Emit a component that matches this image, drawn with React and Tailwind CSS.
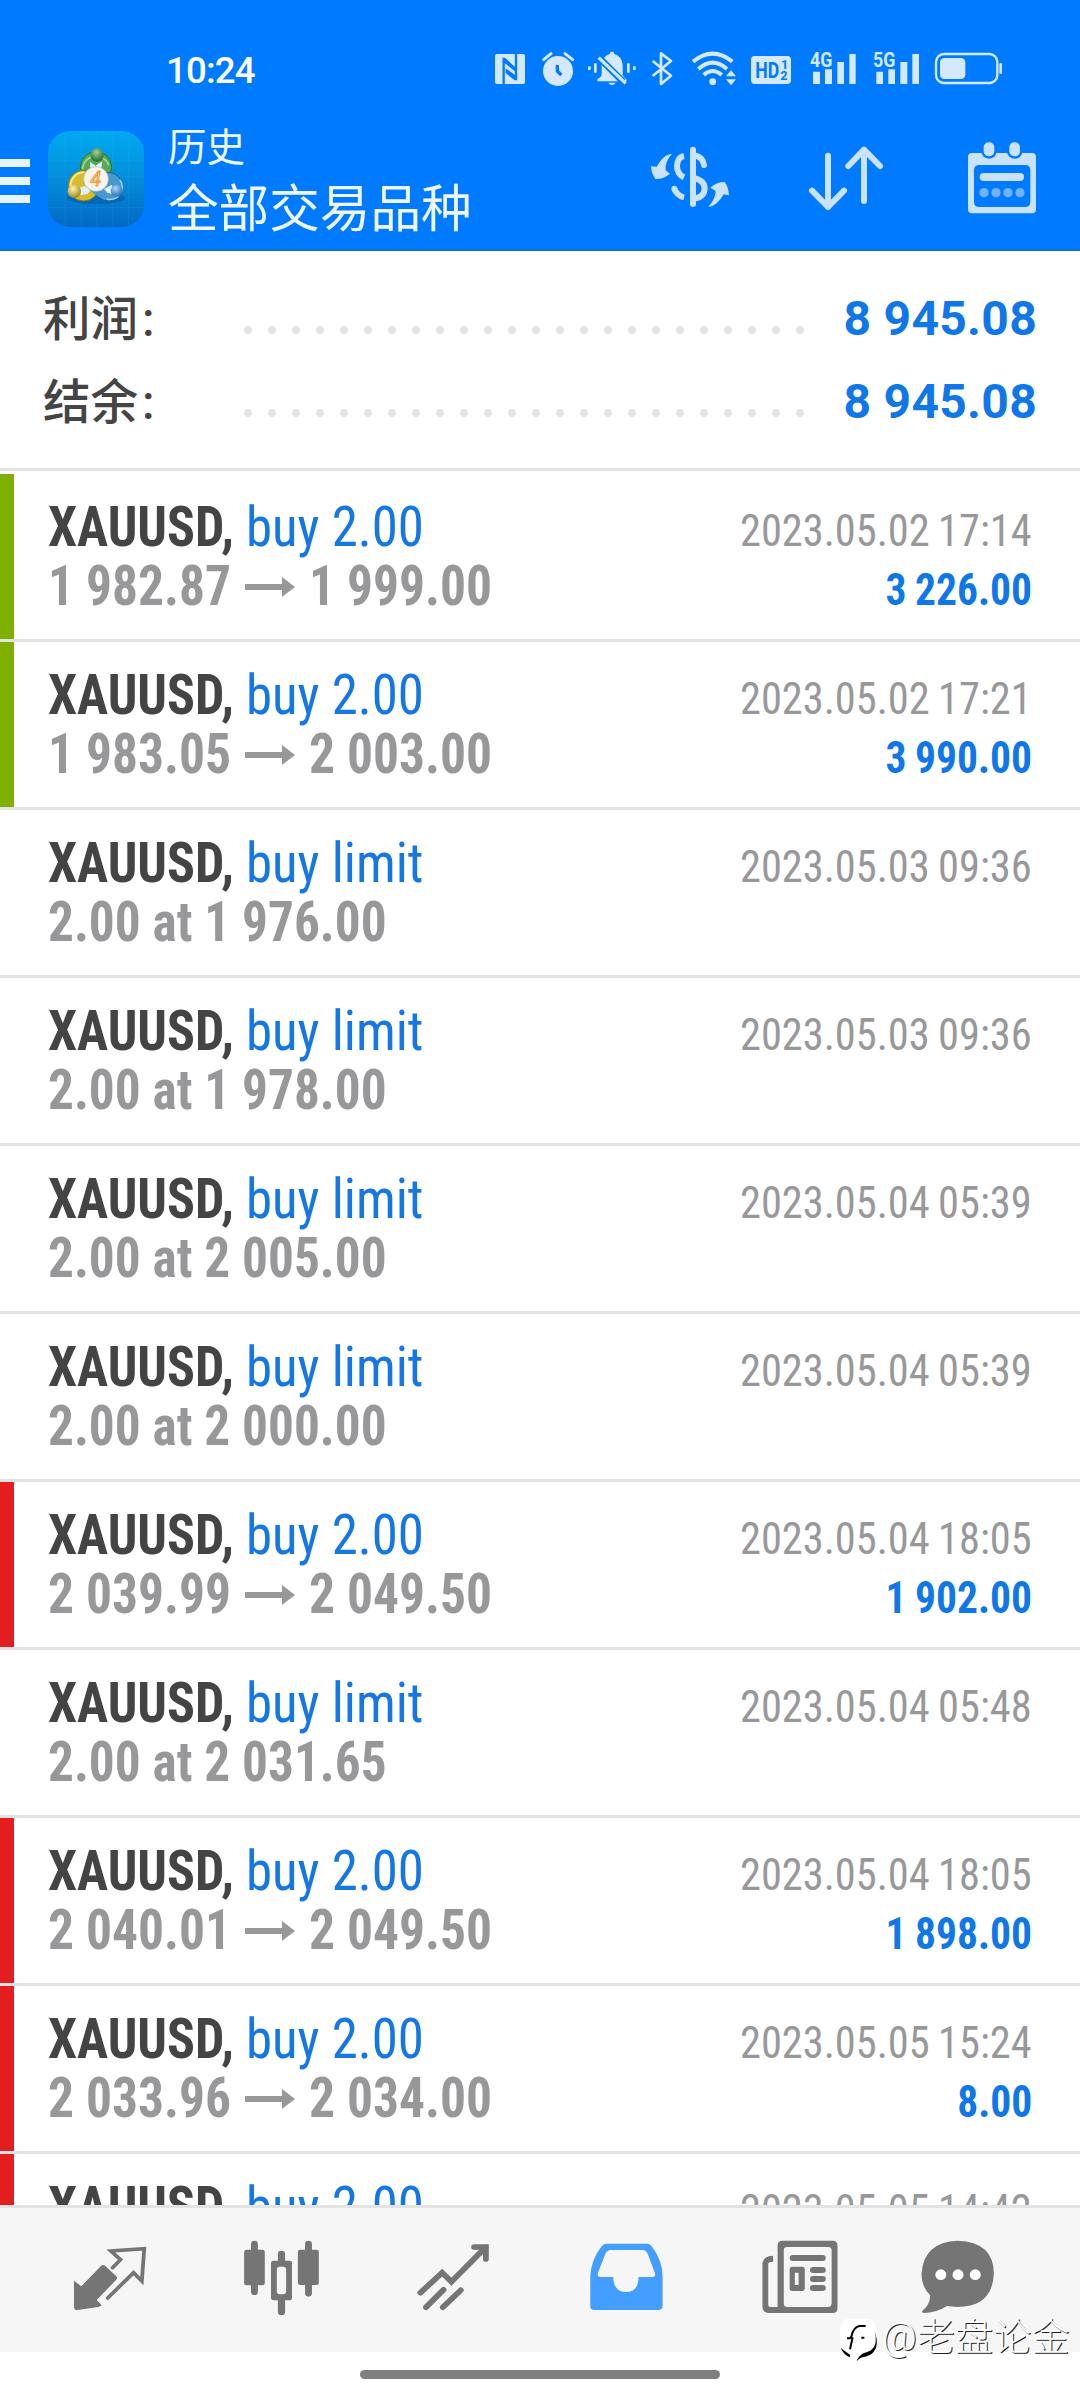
import React from "react";

const rows = [
  { bar: "green", op: "buy 2.00", from: "1 982.87", to: "1 999.00", date: "2023.05.02 17:14", profit: "3 226.00" },
  { bar: "green", op: "buy 2.00", from: "1 983.05", to: "2 003.00", date: "2023.05.02 17:21", profit: "3 990.00" },
  { op: "buy limit", at: "2.00 at 1 976.00", date: "2023.05.03 09:36" },
  { op: "buy limit", at: "2.00 at 1 978.00", date: "2023.05.03 09:36" },
  { op: "buy limit", at: "2.00 at 2 005.00", date: "2023.05.04 05:39" },
  { op: "buy limit", at: "2.00 at 2 000.00", date: "2023.05.04 05:39" },
  { bar: "red", op: "buy 2.00", from: "2 039.99", to: "2 049.50", date: "2023.05.04 18:05", profit: "1 902.00" },
  { op: "buy limit", at: "2.00 at 2 031.65", date: "2023.05.04 05:48" },
  { bar: "red", op: "buy 2.00", from: "2 040.01", to: "2 049.50", date: "2023.05.04 18:05", profit: "1 898.00" },
  { bar: "red", op: "buy 2.00", from: "2 033.96", to: "2 034.00", date: "2023.05.05 15:24", profit: "8.00" },
  { bar: "red", op: "buy 2.00", date: "2023.05.05 14:42" },
];

const barColor = { green: "bg-[#7db000]", red: "bg-[#e21e1e]" };

function StatusIcon({ x, w, children }) {
  return (
    <svg width={w / 3} height="48" viewBox={`${x} 0 ${w} 144`} className="block shrink-0" fill="#d4e9ff" stroke="none">
      {children}
    </svg>
  );
}

function StatusBar() {
  return (
    <div className="flex h-[111px] items-start">
      <div className="ml-[166px] mt-[49px] w-[319px] whitespace-nowrap text-[36.5px] font-medium leading-[44px] tracking-[-0.8px] text-white">10:24</div>
      <div className="mt-[45px] flex">
        <StatusIcon x={0} w={150}>
          <rect x="30" y="27" width="90" height="90" rx="6" />
          <path d="M56 117 V44 L86 70 M93 27 V100 L64 76" fill="none" stroke="#007aff" strokeWidth="7" />
          <path d="M56 38 L60 38 L92 68 V80 L56 52Z M93 106 L89 106 L62 84 V70 L93 92Z" fill="#007aff" />
        </StatusIcon>
        <StatusIcon x={150} w={138}>
          <circle cx="219" cy="78" r="45" />
          <path d="M176 44 L198 26 M240 26 L263 44" stroke="#d4e9ff" strokeWidth="9" strokeLinecap="round" />
          <path d="M217 60 V79 L229 90" fill="none" stroke="#007aff" strokeWidth="10" strokeLinejoin="round" />
        </StatusIcon>
        <StatusIcon x={288} w={189}>
          <path d="M381 20 Q388 20 388 27 Q411 34 413 60 V90 Q415 98 425 104 Q425 109 420 109 H341 Q334 108 339 101 Q350 95 350 86 V60 Q352 34 374 27 Q374 20 381 20Z M370 113 H392 Q388 120 381 120 Q374 120 370 113Z" />
          <path d="M336 32 L414 110" stroke="#007aff" strokeWidth="20" />
          <path d="M341 38 L422 115" stroke="#d4e9ff" strokeWidth="10" />
          <path d="M313 64 V75 M331 55 V83 M430 55 V83 M448 64 V75" stroke="#d4e9ff" strokeWidth="8" />
        </StatusIcon>
        <StatusIcon x={477} w={111}>
          <path d="M503 48 L558 92 L528 117 V25 L558 48 L503 93" fill="none" stroke="#d4e9ff" strokeWidth="8" strokeLinejoin="round" />
        </StatusIcon>
        <StatusIcon x={588} w={168}>
          <path d="M624 50 Q683 2 742 50 M640 72 Q683 34 726 72 M656 90 Q683 66 710 90" fill="none" stroke="#d4e9ff" strokeWidth="12" />
          <circle cx="683" cy="110" r="10" />
          <path d="M723 94 L738 76 L753 94Z M723 103 L738 121 L753 103Z" />
        </StatusIcon>
        <StatusIcon x={6} w={189}>
          <rect x="48" y="33" width="120" height="84" rx="11" />
          <text x="61" y="98" fill="#007aff" fontSize="66" fontWeight="700" textLength="72" lengthAdjust="spacingAndGlyphs" fontFamily="Roboto">HD</text>
          <text x="138" y="72" fill="#007aff" fontSize="38" fontWeight="700" fontFamily="Roboto">1</text>
          <text x="136" y="106" fill="#007aff" fontSize="38" fontWeight="700" fontFamily="Roboto">2</text>
        </StatusIcon>
        <StatusIcon x={195} w={195}>
          <path d="M234 80H255V117H234Z M270 73H291V117H270Z M307 51H327V117H307Z M343 27H362V117H343Z" />
          <text x="225" y="66" fontSize="60" fontWeight="700" textLength="67" lengthAdjust="spacingAndGlyphs" fontFamily="Roboto" stroke="#007aff" strokeWidth="4" paintOrder="stroke">4G</text>
        </StatusIcon>
        <StatusIcon x={390} w={189}>
          <path d="M424 80H444V117H424Z M460 73H480V117H460Z M496 51H517V117H496Z M532 27H552V117H532Z" />
          <text x="414" y="66" fontSize="60" fontWeight="700" textLength="67" lengthAdjust="spacingAndGlyphs" fontFamily="Roboto" stroke="#007aff" strokeWidth="4" paintOrder="stroke">5G</text>
        </StatusIcon>
        <StatusIcon x={579} w={261}>
          <rect x="603" y="27" width="184" height="87" rx="24" fill="none" stroke="#d4e9ff" strokeWidth="7" />
          <rect x="615" y="39" width="76" height="63" rx="13" />
          <rect x="793" y="54" width="8" height="33" rx="4" />
        </StatusIcon>
      </div>
    </div>
  );
}

function AppLogo() {
  return (
    <svg width="96" height="96" viewBox="24 33 288 288" className="block shrink-0">
      <defs>
        <linearGradient id="sky" x1="0" y1="0" x2="0" y2="1">
          <stop offset="0" stopColor="#00a9f0" />
          <stop offset="0.4" stopColor="#0394df" />
          <stop offset="1" stopColor="#0468c4" />
        </linearGradient>
        <radialGradient id="green" cx="0.45" cy="0.3" r="0.7"><stop offset="0" stopColor="#a6d08c" /><stop offset="1" stopColor="#1f6b35" /></radialGradient>
        <radialGradient id="gold" cx="0.4" cy="0.3" r="0.8"><stop offset="0" stopColor="#fff3a8" /><stop offset="1" stopColor="#927a0e" /></radialGradient>
        <radialGradient id="blue" cx="0.4" cy="0.3" r="0.8"><stop offset="0" stopColor="#a9d8f5" /><stop offset="1" stopColor="#1460a5" /></radialGradient>
      </defs>
      <rect x="24" y="33" width="288" height="288" rx="66" fill="url(#sky)" />
      <path d="M75 33V321M123 33V321M170 33V321M217 33V321M265 33V321M24 75H312M24 122H312M24 169H312M24 216H312M24 262H312" stroke="#48c4f5" strokeOpacity="0.18" strokeWidth="2" />
      <ellipse cx="168" cy="234" rx="88" ry="18" fill="#064f94" opacity="0.45" />
      <circle cx="168" cy="142" r="47" fill="#57a857" stroke="#2b7335" strokeWidth="3" />
      <path d="M128 148 A40 40 0 0 1 206 136" fill="none" stroke="#a5d58e" strokeWidth="5" />
      <circle cx="205" cy="200" r="43" fill="#4899d2" stroke="#195c99" strokeWidth="3" />
      <path d="M240 180 A37 37 0 0 1 200 237" fill="none" stroke="#9bd3f1" strokeWidth="5" />
      <circle cx="131" cy="197" r="46" fill="#d6bb33" stroke="#8d7812" strokeWidth="3" />
      <path d="M92 198 A40 40 0 0 1 132 157" fill="none" stroke="#f6e887" strokeWidth="6" />
      <path d="M178 232 L148 210 L170 190Z" fill="#4899d2" />
      <path d="M150 125 L166 137 L187 124 L184 145H151Z M118 203L136 198L151 213L142 222L121 226Z M192 207L216 194L220 223L202 218Z" fill="#dff3f5" />
      <circle cx="171" cy="105" r="20" fill="url(#green)" />
      <circle cx="103" cy="214" r="20" fill="url(#gold)" />
      <circle cx="230" cy="212" r="18" fill="url(#blue)" />
      <circle cx="168" cy="177" r="37" fill="#f6f4f0" stroke="#b5b8a8" strokeWidth="2" />
      <text x="167" y="197" textAnchor="middle" fontFamily="Roboto" fontWeight="400" fontStyle="italic" fontSize="58" fill="#fbe3c4" stroke="#ef9a3c" strokeWidth="3">4</text>
    </svg>
  );
}

function Header() {
  return (
    <div className="flex h-[138px] items-start text-[#eef7ff]">
      <div className="mt-[48px] flex w-[30px] shrink-0 flex-col gap-[10px]">
        <div className="h-[8px] bg-[#e6f4ff]" />
        <div className="h-[8px] bg-[#e6f4ff]" />
        <div className="h-[8px] bg-[#e6f4ff]" />
      </div>
      <div className="ml-[18px] mt-[20px]"><AppLogo /></div>
      <div className="ml-[24px] w-[432px] whitespace-nowrap">
        <div className="mt-[10px] text-[38.5px] leading-[54px]">历史</div>
        <div className="mt-[5px] text-[50.6px] leading-[60px]">全部交易品种</div>
      </div>
      <svg width="480" height="138" viewBox="0 3 1440 414" className="block shrink-0" fill="#c9e2ff">
        <g fill="none" stroke="#c9e2ff" strokeWidth="18">
          <path d="M279 119V282" strokeLinecap="round" />
          <path d="M252 138 Q231 142 231 170 Q232 193 252 202" />
          <path d="M285 136 Q308 141 312 165" strokeLinecap="round" />
          <path d="M285 205 Q314 212 314 237 Q313 260 285 266" />
          <path d="M252 262 Q230 257 223 236" strokeLinecap="butt" />
        </g>
        <circle cx="223" cy="236" r="9" />
        <path d="M216 131 Q190 132 170 170 L153 169 Q154 190 166 207 Q190 208 210 191 L197 181 Q193 157 216 131Z" />
        <path d="M325 291 Q347 265 347 243 L331 233 Q348 216 374 216 Q386 232 387 256 L371 253 Q353 287 325 291Z" />
        <g fill="none" stroke="#c9e2ff" strokeWidth="18" strokeLinecap="round" strokeLinejoin="round">
          <path d="M684 137V291M636 242L684 291L732 242" />
          <path d="M792 273V119M745 168L792 119L840 168" />
        </g>
        <path fillRule="evenodd" d="M1116 129 H1296 Q1308 129 1308 141 V298 Q1308 310 1296 310 H1116 Q1104 310 1104 298 V141 Q1104 129 1116 129Z M1138 165 Q1122 165 1122 181 V275 Q1122 291 1138 291 H1275 Q1291 291 1291 275 V181 Q1291 165 1275 165Z" />
        <rect x="1144" y="90" width="46" height="56" rx="22" fill="#007aff" />
        <rect x="1221" y="90" width="46" height="56" rx="22" fill="#007aff" />
        <rect x="1151" y="97" width="32" height="42" rx="15" />
        <rect x="1228" y="97" width="32" height="42" rx="15" />
        <rect x="1139" y="189" width="133" height="24" rx="12" />
        <g fill="#6fb2ff">
          <circle cx="1152" cy="248" r="14" /><circle cx="1188" cy="248" r="14" /><circle cx="1224" cy="248" r="14" /><circle cx="1260" cy="248" r="14" />
        </g>
      </svg>
    </div>
  );
}

function SummaryLine({ label, value }) {
  return (
    <div className="flex h-[83px] items-start justify-between pl-[43px] pr-[43px]">
      <div className="mt-[3px] w-[201px] text-[47.5px] font-medium leading-[56px] text-[#444444]">{label}<span className="ml-[4px]">:</span></div>
      <div className="mt-[37px] flex w-[560px] gap-[16px]">
        {Array.from({ length: 24 }, (_, i) => (
          <div key={i} className="size-[8px] shrink-0 rounded-full bg-[#e4e4e4]" />
        ))}
      </div>
      <div className="mt-[2px] flex-1 whitespace-nowrap text-right text-[48px] font-bold leading-[56px] tracking-[0.3px] text-[#0f77e8]">{value}</div>
    </div>
  );
}

function Row({ row }) {
  return (
    <div className="flex h-[168px] shrink-0 items-stretch border-b-[3px] border-[#e3e3e3] [font-stretch:75%]">
      <div className={`w-[14px] shrink-0 ${row.bar ? barColor[row.bar] : "bg-transparent"}`} />
      <div className="ml-[34px] flex flex-1 flex-col whitespace-nowrap pt-[24px] text-[55px] leading-[59px]">
        <div className="flex">
          <span className="w-[198px] origin-left scale-x-[0.945] font-bold text-[#444444]">XAUUSD,</span>
          <span className="origin-left scale-x-[0.96] text-[#1577e6]">{row.op}</span>
        </div>
        <div className="flex font-bold text-[#98989b]">
          {row.at && <span className="origin-left scale-x-[0.933]">{row.at}</span>}
          {row.from && (
            <>
              <span className="w-[197px] origin-left scale-x-[0.937]">{row.from}</span>
              <svg width="50" height="59" viewBox="0 0 50 59" className="block shrink-0" fill="#98989b">
                <path d="M0 27H37V20L50 30L37 40V33H0Z" />
              </svg>
              <span className="ml-[14px] origin-left scale-x-[0.937]">{row.to}</span>
            </>
          )}
        </div>
      </div>
      <div className="mr-[48px] flex flex-col items-end whitespace-nowrap pt-[27px] text-[45px] leading-[59px]">
        <span className="origin-right scale-x-[0.942] text-[#98989b] [word-spacing:-1.5px]">{row.date}</span>
        <span className="origin-right scale-x-[0.922] font-bold text-[#1077e8] [word-spacing:-1px]">{row.profit}</span>
      </div>
    </div>
  );
}

function NavIcon({ x, className, children }) {
  return (
    <svg width="88" height="144" viewBox={`${x} 204 255.6 432`} preserveAspectRatio="none" className={`block shrink-0 ${className}`} fill="#757575">
      {children}
    </svg>
  );
}

function BottomNav() {
  return (
    <div className="flex h-[147px] shrink-0 border-t-[3px] border-[#e3e3e3] bg-[#f6f6f6]">
      <NavIcon x={191.7} className="ml-[66px]">
        <path d="M215 422 L236 439 L294 377 Q300 372 306 378 L337 408 Q343 414 337 420 L281 480 L295 495 Q293 499 285 501 L226 510 Q215 511 215 500Z" />
        <path d="M327 383 L350 359 L322 333 L419 326 L412 423 L388 398 L313 474" fill="none" stroke="#757575" strokeWidth="11" strokeLinecap="round" />
      </NavIcon>
      <NavIcon x={691.2} className="ml-[84px]">
        <rect x="709" y="329" width="60" height="107" rx="7" />
        <rect x="729" y="302" width="20" height="163" rx="10" />
        <rect x="865" y="329" width="61" height="106" rx="7" />
        <rect x="886" y="302" width="20" height="168" rx="10" />
        <rect x="807" y="332" width="21" height="193" rx="10" />
        <rect x="787" y="362" width="61" height="119" rx="7" />
        <rect x="804" y="380" width="27" height="83" rx="9" fill="#f6f6f6" />
      </NavIcon>
      <NavIcon x={1190.6} className="ml-[84px]">
        <path d="M1221 458 L1284 398 L1311 425 L1411 321 M1377 321H1411V357 M1237 502L1288 449 M1286 502L1338 451" fill="none" stroke="#757575" strokeWidth="17" strokeLinecap="round" />
      </NavIcon>
      <NavIcon x={122} className="ml-[84px]">
        <path fill="#439eff" fillRule="evenodd" d="M193 311 H310 Q320 311 326 321 Q356 362 356 410 V497 Q356 510 343 510 H159 Q146 510 146 497 V410 Q148 360 178 320 Q184 311 193 311Z M205 330 Q195 330 190 341 L168 399 Q166 411 175 411 H213 V420 Q218 456 250 456 Q282 456 286 420 V411 H327 Q336 411 334 400 L313 342 Q308 330 299 330Z" />
      </NavIcon>
      <NavIcon x={627.3} className="ml-[86px]">
        <path fillRule="evenodd" d="M704 302 H850 Q864 302 864 316 V505 Q864 519 850 519 H664 Q646 517 646 500 V370 Q648 348 677 347 V365 Q663 365 663 372 V494 Q663 501 671 501 H690 V316 Q690 302 704 302Z M718 321 Q708 321 708 331 V490 Q708 501 718 501 H836 Q847 501 847 490 V331 Q847 321 836 321Z" />
        <rect x="725" y="345" width="105" height="18" rx="9" />
        <path fillRule="evenodd" d="M733 380H761Q769 380 769 388V445Q769 453 761 453H733Q725 453 725 445V388Q725 380 733 380ZM740 398V435H751V398Z" />
        <rect x="784" y="381" width="46" height="18" rx="9" />
        <rect x="784" y="408" width="46" height="18" rx="9" />
        <rect x="784" y="435" width="46" height="18" rx="9" />
      </NavIcon>
      <NavIcon x={1086.1} className="ml-[70px]">
        <path d="M1213 302 Q1318 306 1318 401 Q1314 500 1213 501 Q1195 500 1182 498 Q1150 519 1114 519 Q1106 517 1112 511 Q1133 494 1133 466 Q1108 440 1108 401 Q1114 306 1213 302Z" />
        <circle cx="1164" cy="404" r="16" fill="#fff" /><circle cx="1214" cy="404" r="16" fill="#fff" /><circle cx="1264" cy="404" r="16" fill="#fff" />
      </NavIcon>
    </div>
  );
}

function Watermark() {
  return (
    <div className="absolute left-[838px] top-[2310px] flex items-center">
      <svg width="44" height="54" viewBox="24 36 132 162" className="block">
        <path d="M55 62 H110 Q139 64 138 95 V130 Q136 155 118 161 Q95 165 84 188 L84 176 Q92 166 60 174 Q30 160 30 125 V90 Q32 64 55 62Z" fill="#fff" />
        <path d="M51 121 H60 L64 116 Q70 87 88 84 H107 M68 118 L60 154 M94 119H103" fill="none" stroke="#000" strokeWidth="6" />
        <path d="M134 98 Q145 140 123 157 Q112 163 100 166 Q84 175 80 190 Q88 178 105 176 Q124 173 132 160 Q148 142 134 98Z M32 150 L60 170 L60 178 Q42 172 32 150Z" />
      </svg>
      <span className="whitespace-nowrap text-[38px] font-light leading-[54px] tracking-[0.2px] text-white [text-shadow:1px_1px_0_#222222]">@老盘论金</span>
    </div>
  );
}

export default function App() {
  return (
    <div className="relative flex h-[2400px] w-[1080px] flex-col overflow-hidden bg-white font-['Roboto','Noto_Sans_CJK_SC',sans-serif]">
      <div className="h-[251px] shrink-0 border-b-2 border-[#1070cf] bg-[#007aff]">
        <StatusBar />
        <Header />
      </div>
      <div className="h-[220px] shrink-0 border-b-[3px] border-[#e3e3e3] pt-[38px]">
        <SummaryLine label="利润" value="8 945.08" />
        <SummaryLine label="结余" value="8 945.08" />
      </div>
      <div className="h-[1734px] shrink-0 overflow-hidden pt-[3px]">
        {rows.map((row, i) => <Row key={i} row={row} />)}
      </div>
      <BottomNav />
      <div className="flex flex-1 justify-center pt-[18px]">
        <div className="h-[9px] w-[360px] rounded-full bg-[#808080]" />
      </div>
      <Watermark />
    </div>
  );
}
